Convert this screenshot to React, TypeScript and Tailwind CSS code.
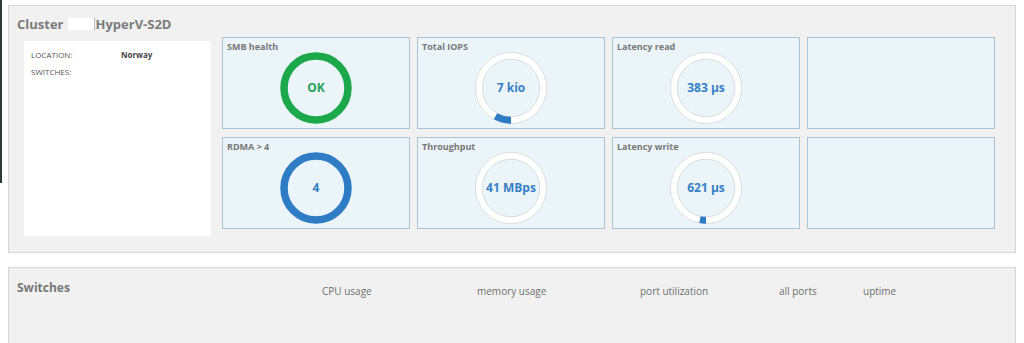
import React from 'react';

type Tile = {
  title?: string;
  value?: string;
  kind?: 'green' | 'blue' | 'ring';
  fraction?: number;
};

const tiles: Tile[] = [
  { title: 'SMB health', value: 'OK', kind: 'green' },
  { title: 'Total IOPS', value: '7 kio', kind: 'ring', fraction: 0.08 },
  { title: 'Latency read', value: '383 µs', kind: 'ring', fraction: 0 },
  {},
  { title: 'RDMA > 4', value: '4', kind: 'blue' },
  { title: 'Throughput', value: '41 MBps', kind: 'ring', fraction: 0 },
  { title: 'Latency write', value: '621 µs', kind: 'ring', fraction: 0.03 },
  {},
];

function Gauge({ kind, value, fraction = 0 }: { kind: Tile['kind']; value: string; fraction?: number }) {
  const r = 32.25;
  const c = 2 * Math.PI * r;
  const solid = kind === 'green' ? '#1aa84b' : '#2e7dc4';
  return (
    <div className="relative w-[72px] h-[72px] flex items-center justify-center">
      <svg className="absolute inset-0" width="72" height="72" viewBox="0 0 72 72">
        {kind === 'ring' ? (
          <>
            <circle cx="36" cy="36" r={r} fill="none" stroke="#ffffff" strokeWidth="7" />
            <circle cx="36" cy="36" r="35.6" fill="none" stroke="#d4d4d4" strokeWidth="0.8" />
            <circle cx="36" cy="36" r="28.8" fill="none" stroke="#d4d4d4" strokeWidth="0.8" />
            {fraction > 0 && (
              <circle
                cx="36"
                cy="36"
                r={r}
                fill="none"
                stroke="#2e7dc4"
                strokeWidth="7"
                strokeDasharray={`${fraction * c} ${c}`}
                transform="rotate(90 36 36)"
              />
            )}
          </>
        ) : (
          <circle cx="36" cy="36" r="32" fill="none" stroke={solid} strokeWidth="7.5" />
        )}
      </svg>
      <span
        className={
          'relative text-[12px] font-bold leading-none ' +
          (kind === 'green' ? 'text-[#1fa158]' : 'text-[#3581c4]')
        }
      >
        {value}
      </span>
    </div>
  );
}

export default function App() {
  return (
    <main className="relative w-[1024px] h-[343px] overflow-hidden bg-white font-['Open_Sans',sans-serif]">
      <div className="absolute left-0 top-0 w-[2px] h-[183px] bg-[#2e3a3a]" />

      <div className="pt-[5px] px-2">
        <section className="h-[248px] border border-[#d7d7d7] bg-[#f1f1f1]">
          <h2 className="pl-2 pt-[9px] flex items-center text-[13px] leading-[18px] font-bold text-[#7b7b7b]">
            Cluster
            <span className="inline-block w-[27px] h-[12px] bg-white ml-[5px] border-r border-[#bbbbbb]" />
            HyperV-S2D
          </h2>

          <div className="flex items-start mt-[4px] pl-[15px]">
            <div className="w-[187px] h-[195px] mt-[4px] bg-white pl-[7px] pt-[5px] text-[8px] leading-[17px] text-[#555]">
              <div className="flex">
                <span className="w-[90px]">LOCATION:</span>
                <span className="font-bold text-[#444]">Norway</span>
              </div>
              <div className="flex">
                <span className="w-[90px]">SWITCHES:</span>
              </div>
            </div>

            <div className="ml-[11px] grid grid-cols-[repeat(4,188px)] grid-rows-[92px_92px] gap-x-[7px] gap-y-[8px]">
              {tiles.map((t, i) => (
                <div key={i} className="h-[92px] border border-[#aac3d5] bg-[#ebf4f9] flex flex-col">
                  <p className="pl-[4px] pt-[3px] text-[9px] leading-[11px] font-bold text-[#777]">{t.title}</p>
                  {t.value && (
                    <div className="flex justify-center">
                      <Gauge kind={t.kind} value={t.value} fraction={t.fraction} />
                    </div>
                  )}
                </div>
              ))}
            </div>
          </div>
        </section>

        <section className="mt-[14px] h-[100px] border border-[#d7d7d7] bg-[#f1f1f1]">
          <div className="flex items-start pt-[11px] text-[#777]">
            <h2 className="pl-2 w-[313px] text-[12px] leading-[18px] font-bold">Switches</h2>
            <div className="flex pt-[5px] text-[10px] leading-[14px] text-[#6f6f6f]">
              <span className="w-[155px]">CPU usage</span>
              <span className="w-[163px]">memory usage</span>
              <span className="w-[139px]">port utilization</span>
              <span className="w-[84px]">all ports</span>
              <span>uptime</span>
            </div>
          </div>
        </section>
      </div>
    </main>
  );
}
